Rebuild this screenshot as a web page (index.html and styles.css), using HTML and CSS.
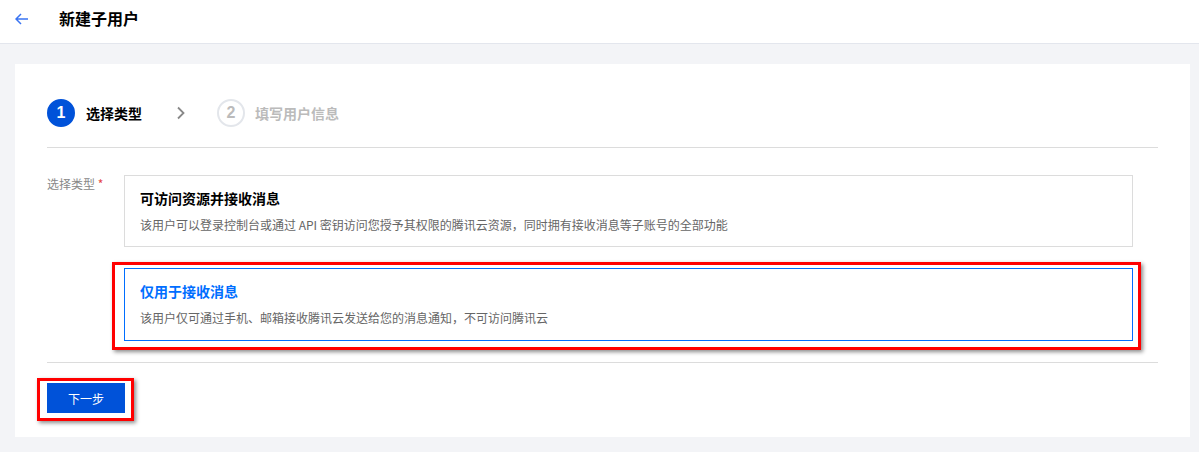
FILE: index.html
```html
<!DOCTYPE html>
<html lang="zh-CN">
<head>
<meta charset="utf-8">
<title>新建子用户</title>
<link rel="stylesheet" href="styles.css">
</head>
<body>
<header class="topbar">
  <span class="back">
    <svg width="14" height="12" viewBox="0 0 14 12"><path d="M13 6H1.5M6 1L1 6l5 5" fill="none" stroke="#3a74f2" stroke-width="1.5"/></svg>
  </span>
  <h1 class="title">新建子用户</h1>
</header>
<main class="main">
  <section class="card">
    <div class="steps">
      <div class="step active"><span class="num">1</span><span class="step-label">选择类型</span></div>
      <svg class="chev" width="10" height="14" viewBox="0 0 10 14"><path d="M2 1.5l5.5 5.5L2 12.5" fill="none" stroke="#888" stroke-width="1.8"/></svg>
      <div class="step"><span class="num">2</span><span class="step-label">填写用户信息</span></div>
    </div>
    <div class="divider"></div>
    <div class="form-row">
      <div class="label">选择类型 <span class="req">*</span></div>
      <div class="options">
        <div class="option">
          <div class="opt-title">可访问资源并接收消息</div>
          <div class="opt-desc">该用户可以登录控制台或通过 API 密钥访问您授予其权限的腾讯云资源，同时拥有接收消息等子账号的全部功能</div>
        </div>
        <div class="option selected">
          <div class="opt-title">仅用于接收消息</div>
          <div class="opt-desc">该用户仅可通过手机、邮箱接收腾讯云发送给您的消息通知，不可访问腾讯云</div>
          <span class="mark mark-opt"></span>
        </div>
      </div>
    </div>
    <div class="divider divider-2"></div>
    <div class="actions">
      <button class="btn">下一步<span class="mark mark-btn"></span></button>
    </div>
  </section>
</main>
</body>
</html>
```
FILE: styles.css
```css
* { box-sizing: border-box; }
html, body { margin: 0; padding: 0; }
body {
  background: #f3f4f7;
  font-family: "Noto Sans CJK SC", "Liberation Sans", sans-serif;
  color: #000;
  width: 1199px;
  height: 452px;
  overflow: hidden;
}
.topbar {
  height: 44px;
  background: #fff;
  border-bottom: 1px solid #e3e6ed;
  display: flex;
  align-items: flex-start;
  padding-left: 15px;
}
.back { display: flex; height: 36px; align-items: center; width: 44px; padding-top: 2px; }
.title {
  margin: 0;
  font-size: 16px;
  font-weight: 700;
  line-height: 36px;
  color: #000;
}
.main { padding: 20px 9px 0 15px; }
.card {
  background: #fff;
  width: 1175px;
  padding: 35px 32px 24px;
}
.steps { display: flex; align-items: center; height: 28px; }
.step { display: flex; align-items: center; }
.num {
  width: 28px; height: 28px; border-radius: 50%;
  display: flex; align-items: center; justify-content: center;
  font-size: 16px; font-weight: 700; font-family: "Liberation Sans", sans-serif;
  border: 2px solid #e3e6eb; color: #bbb; background: #fff;
}
.step-label { margin-left: 11px; font-size: 14px; font-weight: 700; color: #bbb; }
.step.active .num { background: #0052d9; border-color: #0052d9; color: #fff; }
.step.active .step-label { color: #000; }
.step + .chev + .step .step-label { margin-left: 10px; }
.chev { margin: 0 31px 0 34px; }
.divider { height: 1px; background: #dcdcdc; margin-top: 20px; }
.form-row { display: flex; margin-top: 27px; }
.label { width: 77px; font-size: 12px; color: #888; line-height: 18px; }
.req { color: #e54545; }
.options { width: 1009px; display: flex; flex-direction: column; gap: 21px; }
.option {
  position: relative;
  border: 1px solid #dcdcdc;
  padding: 11px 15px 12px;
  height: 72px;
}
.option.selected { border-color: #006eff; height: 73px; }
.opt-title { font-size: 14px; font-weight: 700; line-height: 22px; color: #000; }
.option.selected .opt-title { color: #006eff; }
.opt-desc { font-size: 12px; color: #666; line-height: 20px; margin-top: 6px; }
.mark {
  position: absolute;
  border: 3px solid #ff0000;
  box-shadow: 2px 2px 4px rgba(0,0,0,0.45);
  pointer-events: none;
}
.mark-opt { left: -13px; right: -9px; top: -7px; bottom: -10px; }
.divider-2 { margin-top: 21px; }
.actions { padding-top: 20px; }
.btn {
  position: relative;
  width: 78px; height: 30px;
  background: #0052d9; color: #fff;
  border: none; font-size: 12px;
  font-family: "Noto Sans CJK SC", sans-serif;
  display: block; padding: 0;
}
.mark-btn { left: -10px; right: -9px; top: -5px; bottom: -8px; }
```
